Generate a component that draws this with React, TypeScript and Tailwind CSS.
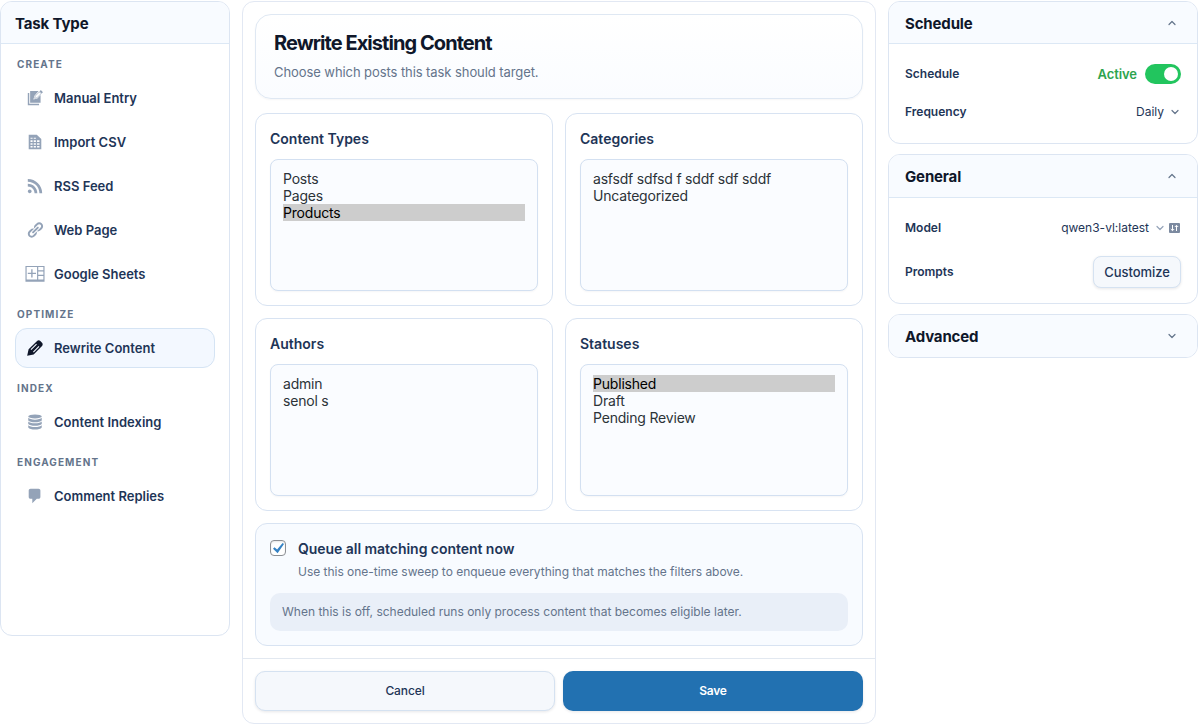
import { useState, type ReactNode } from 'react'

const icons: Record<string, ReactNode> = {
  manual: (
    <>
      <path d="M2 4.500v13.500h12.500v-1.600H3.600V4.500z" />
      <path d="M4.600 2.200h9.400l-4.600 5.200-1.200 4.400 4.400-1.200 3.600-3.800v8.600H4.600z" />
      <path d="M16.500 1.200l2.300 2.300-1.500 1.500-2.300-2.300z" />
      <path d="M14.800 3.300l1.900 1.900-4.700 4.700-2.400.5.500-2.400z" className="fill-white stroke-current" strokeWidth=".7" />
    </>
  ),
  csv: <path fillRule="evenodd" d="M3 2h9l5 4.6V18H3zM5 5.2v1.3h2.3V5.2zm3.6 0v1.3H11V5.2zM5 8v2h2.3V8zm3.6 0v2H11V8zm3.7 0v2H15V8zM5 11.3v1.8h2.3v-1.8zm3.6 0v1.8H11v-1.8zm3.7 0v1.8H15v-1.8zM5 14.5v1.7h2.3v-1.7zm3.6 0v1.7H11v-1.7zm3.7 0v1.7H15v-1.7z" />,
  rss: <path d="M14.92 18H18C18 9.32 10.82 2.25 2 2.25v3.02c7.12 0 12.92 5.71 12.92 12.73zm-5.44 0h3.08C12.56 12.27 7.82 7.6 2 7.6v3.02c2 0 3.87.77 5.29 2.16C8.7 14.17 9.48 16.03 9.48 18zm-5.35-.02c1.17 0 2.13-.93 2.13-2.09 0-1.15-.96-2.09-2.13-2.09-1.18 0-2.13.94-2.13 2.09 0 1.16.95 2.09 2.13 2.09z" />,
  link: <path d="M17.74 2.76c1.68 1.69 1.68 4.41 0 6.1l-1.53 1.52c-1.12 1.12-2.7 1.47-4.14 1.09l2.62-2.61.76-.77.76-.76c.84-.84.84-2.2 0-3.04-.84-.85-2.2-.85-3.04 0l-.77.76-3.38 3.38c-.37-1.44-.02-3.02 1.1-4.14l1.52-1.53c1.69-1.68 4.42-1.68 6.1 0zM8.59 13.43l5.34-5.34c.42-.42.42-1.1 0-1.52-.44-.43-1.13-.39-1.53 0l-5.33 5.34c-.42.42-.42 1.1 0 1.52.44.43 1.13.39 1.52 0zm-.76 2.29l4.14-4.15c.38 1.44.03 3.02-1.09 4.14l-1.52 1.53c-1.69 1.68-4.41 1.68-6.1 0-1.68-1.68-1.68-4.42 0-6.1l1.53-1.52c1.12-1.12 2.7-1.47 4.14-1.1l-4.14 4.15c-.85.84-.85 2.2 0 3.05.84.84 2.2.84 3.04 0z" />,
  sheets: <path fillRule="evenodd" d="M-.6 1h21.200v17.600H-.6zM.7 2.300v13.800h11.600V2.300zm12.900 0v3.500h5.700V2.300zm0 4.800v3.700h5.700V7.100zm0 5v4h5.700v-4zM5.800 4.600h1.500v3.900h3.800v1.400H7.300v3.900H5.800V9.900H2V8.500h3.800z" />,
  edit: (
    <>
      <path d="M1.300 18.700l1.600-7.200L12.300 2.200c1-1 2.600-1 3.600 0l1.900 1.900c1 1 1 2.600 0 3.600l-9.300 9.400z" />
      <path d="M5.500 11.800l6.200-6.200M8.200 14.500l6.200-6.200" className="fill-none stroke-[#f3f8ff]" strokeWidth="1.200" />
    </>
  ),
  database: (
    <>
      <ellipse cx="10" cy="3.800" rx="7.500" ry="2.200" />
      <path d="M2.500 5.400c1 1.400 4 2 7.500 2s6.500-.6 7.500-2v2.800c-1 1.400-4 2-7.500 2s-6.500-.6-7.500-2z" />
      <path d="M2.500 9.500c1 1.400 4 2 7.500 2s6.500-.6 7.500-2v2.800c-1 1.400-4 2-7.500 2s-6.500-.6-7.500-2z" />
      <path d="M2.500 13.600c1 1.400 4 2 7.500 2s6.500-.6 7.500-2v2.400c-1 1.600-4 2.300-7.500 2.300s-6.500-.7-7.500-2.300z" />
    </>
  ),
  comment: <path d="M5 2h9c1.1 0 2 .9 2 2v7c0 1.1-.9 2-2 2h-2l-5 5v-5H5c-1.100 0-2-.9-2-2V4c0-1.100.9-2 2-2z" />,
}

const groups = [
  {
    label: 'Create',
    items: [
      { id: 'manual', label: 'Manual Entry' },
      { id: 'csv', label: 'Import CSV' },
      { id: 'rss', label: 'RSS Feed' },
      { id: 'link', label: 'Web Page' },
      { id: 'sheets', label: 'Google Sheets' },
    ],
  },
  { label: 'Optimize', items: [{ id: 'edit', label: 'Rewrite Content' }] },
  { label: 'Index', items: [{ id: 'database', label: 'Content Indexing' }] },
  { label: 'Engagement', items: [{ id: 'comment', label: 'Comment Replies' }] },
]

const filters = [
  { title: 'Content Types', options: ['Posts', 'Pages', 'Products'], initial: 'Products' },
  { title: 'Categories', options: ['asfsdf sdfsd f sddf sdf sddf', 'Uncategorized'], initial: '' },
  { title: 'Authors', options: ['admin', 'senol s'], initial: '' },
  { title: 'Statuses', options: ['Published', 'Draft', 'Pending Review'], initial: 'Published' },
]

function Chevron({ up = false, className = '' }: { up?: boolean; className?: string }) {
  return (
    <svg viewBox="0 0 8 8" className={`size-2 fill-none stroke-current ${className}`} strokeWidth="1.2" strokeLinecap="round" strokeLinejoin="round">
      <path d={up ? 'M1 5.500 4 2.500l3 3' : 'M1 2.500l3 3 3-3'} />
    </svg>
  )
}

function FilterCard({ title, options, initial }: { title: string; options: string[]; initial: string }) {
  const [selected, setSelected] = useState(initial)
  return (
    <section className="h-[193px] rounded-xl border border-[#d8e3f2] bg-white px-3.5 pt-[15px]">
      <h3 className="text-sm/5 font-semibold text-[#1e3557]">{title}</h3>
      <ul className="mt-2.5 h-[132px] rounded-lg border border-[#d3e0f1] bg-[#fafcff] px-3 pt-2.5 shadow-[0_1px_2px_rgba(15,23,42,0.04)]">
        {options.map(o => (
          <li
            key={o}
            onClick={() => setSelected(o)}
            className={`h-[17px] text-sm/[17px] tracking-[-0.014em] ${selected === o ? 'bg-[#cdcdcd] text-black' : 'text-[#2c3338]'}`}
          >
            {o}
          </li>
        ))}
      </ul>
    </section>
  )
}

function Panel({ title, headerClass = 'h-[42px]', children }: { title: string; headerClass?: string; children?: ReactNode }) {
  return (
    <section className="overflow-hidden rounded-xl border border-[#dce5f2] bg-white">
      <header className={`flex items-center justify-between bg-[#f8fbff] pr-[21px] pl-4 ${headerClass} ${children ? 'border-b border-[#dce8f5]' : ''}`}>
        <h2 className="pt-[3px] text-[15px] font-bold tracking-[-0.01em] text-[#0f172a]">{title}</h2>
        <Chevron up={!!children} className="text-[#64748b]" />
      </header>
      {children}
    </section>
  )
}

export default function App() {
  const [active, setActive] = useState('edit')
  const [queueAll, setQueueAll] = useState(true)

  return (
    <div className="flex h-[725px] items-start gap-3 bg-white pt-px font-['Inter',sans-serif] text-[#1e3557]">
      <aside className="h-[635px] w-[230px] shrink-0 overflow-hidden rounded-xl border border-[#dce5f2]">
        <h2 className="flex h-[42px] items-center border-b border-[#dce8f5] bg-[#f8fbff] px-3.5 pt-[3px] text-[15px] font-bold tracking-[-0.01em] text-[#0f172a]">Task Type</h2>
        <nav className="px-3.5 pt-2.5">
          {groups.map(g => (
            <div key={g.label} className="mb-2.5">
              <h3 className="mb-1 h-5 px-0.5 text-[10px]/5 font-bold tracking-[0.11em] text-[#64748b] uppercase">{g.label}</h3>
              <div className="flex flex-col gap-1">
                {g.items.map(i => (
                  <button
                    key={i.id}
                    onClick={() => setActive(i.id)}
                    className={`flex h-10 items-center gap-2.5 rounded-xl border px-2.5 text-[13px] font-semibold ${active === i.id ? 'border-[#d5e4f4] bg-[#f3f8ff]' : 'border-transparent'}`}
                  >
                    <svg viewBox="0 0 20 20" className={`size-[18px] overflow-visible fill-current ${active === i.id ? 'text-[#0f172a]' : 'text-[#94a3b8]'}`}>
                      {icons[i.id]}
                    </svg>
                    <span className="pt-0.5">{i.label}</span>
                  </button>
                ))}
              </div>
            </div>
          ))}
        </nav>
      </aside>

      <main className="h-[723px] w-[634px] shrink-0 rounded-xl border border-[#e2e8f3]">
        <div className="flex h-[657px] flex-col gap-3 border-b border-[#e2e8f0] p-3">
          <header className="mb-0.5 h-[85px] rounded-2xl border border-[#dfe8f3] bg-linear-to-b from-white to-[#fafcff] px-[18px] pt-4 shadow-[0_1px_2px_rgba(15,23,42,0.04)]">
            <h1 className="text-xl/6 font-bold tracking-[-0.047em] text-[#0f172a]">Rewrite Existing Content</h1>
            <p className="mt-2 text-[13px]/[18px] tracking-[-0.006em] text-[#64748b]">Choose which posts this task should target.</p>
          </header>
          <div className="grid grid-cols-2 gap-3">
            {filters.map(f => (
              <FilterCard key={f.title} {...f} />
            ))}
          </div>
          <section className="h-[123px] rounded-xl border border-[#d8e3f2] bg-[#f8fbff] px-3.5 pt-[15px]">
            <label className="flex gap-3">
              <input type="checkbox" checked={queueAll} onChange={() => setQueueAll(!queueAll)} className="sr-only" />
              <span className="mt-px flex size-4 items-center justify-center rounded border border-[#8c8f94] bg-white shadow-[inset_0_1px_2px_rgba(0,0,0,0.1)]">
                {queueAll && (
                  <svg viewBox="0 0 12 12" className="size-3 fill-[#3582c4]">
                    <path d="M10.600 1 12 2 5.600 11.300 1 6.700l1.500-1.500L5.100 7.600z" />
                  </svg>
                )}
              </span>
              <span>
                <span className="block text-sm/5 font-semibold tracking-[-0.003em]">Queue all matching content now</span>
                <span className="mt-1 block text-xs/[18px] tracking-[-0.002em] text-[#64748b]">Use this one-time sweep to enqueue everything that matches the filters above.</span>
              </span>
            </label>
            <p className="mt-3 h-[38px] rounded-[10px] bg-[#e9eff8] px-3 text-xs/[38px] text-[#64748b]">When this is off, scheduled runs only process content that becomes eligible later.</p>
          </section>
        </div>
        <footer className="grid grid-cols-2 gap-2 p-3">
          <button className="h-10 rounded-[10px] border border-[#d5e2f1] bg-[#f5f8fc] text-xs font-medium tracking-[-0.01em] shadow-[0_1px_3px_rgba(15,23,42,0.1)]">Cancel</button>
          <button className="h-10 rounded-[10px] bg-[#2271b1] text-xs font-semibold tracking-[-0.02em] text-white shadow-[0_1px_3px_rgba(15,23,42,0.1)]">Save</button>
        </footer>
      </main>

      <aside className="flex w-[310px] shrink-0 flex-col gap-2.5">
        <Panel title="Schedule">
          <div className="flex h-[99px] flex-col px-4 pt-[19px] text-xs font-semibold">
            <div className="flex h-[22px] items-center justify-between">
              <span>Schedule</span>
              <span className="flex items-center gap-2 text-[13px] text-[#2da44e]">
                <span className="pt-0.5 tracking-[-0.005em]">Active</span>
                <span className="flex h-5 w-9 items-center justify-end rounded-full bg-[#22c55e] pr-[3px]">
                  <span className="size-3.5 rounded-full bg-white" />
                </span>
              </span>
            </div>
            <div className="mt-4 flex h-[22px] items-center justify-between">
              <span>Frequency</span>
              <span className="flex items-center gap-[7px] pr-0.5 font-normal">
                Daily
                <Chevron className="text-[#64748b]" />
              </span>
            </div>
          </div>
        </Panel>
        <Panel title="General" headerClass="h-[43px]">
          <div className="flex h-[105px] flex-col px-4 pt-[19px] text-xs font-semibold">
            <div className="flex h-[22px] items-center justify-between">
              <span>Model</span>
              <span className="flex items-center font-normal">
                qwen3-vl:latest
                <Chevron className="mx-[7px] mr-[5px] text-[#94a3b8]" />
                <svg viewBox="0 0 11 10" className="mr-px h-2.5 w-[11px]">
                  <rect width="11" height="10" rx="1" className="fill-[#7c8aa0]" />
                  <path d="M3.500 2v5.500M1.800 6l1.700 1.700L5.200 6M7.500 8V2.500M5.800 4l1.700-1.700L9.200 4" className="fill-none stroke-white" />
                </svg>
              </span>
            </div>
            <div className="mt-[17px] flex h-8 items-center justify-between">
              <span>Prompts</span>
              <button className="h-8 w-22 rounded-lg border border-[#d5e2f1] bg-[#f5f8fc] pt-0.5 text-[13px] font-medium tracking-[-0.005em] shadow-[0_1px_3px_rgba(15,23,42,0.1)]">Customize</button>
            </div>
          </div>
        </Panel>
        <Panel title="Advanced" />
      </aside>
    </div>
  )
}
